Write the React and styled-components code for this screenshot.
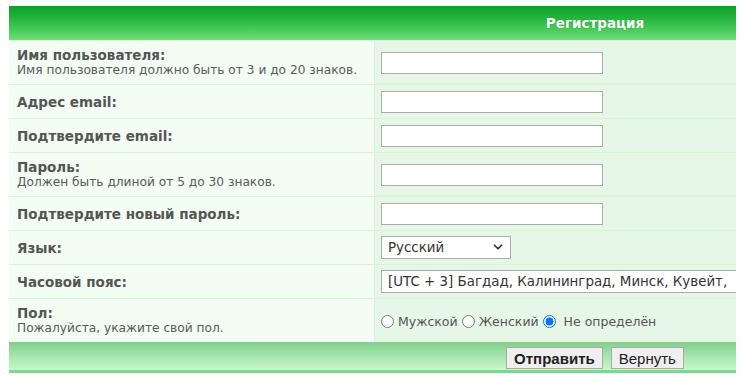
import React from 'react'
import styled, { createGlobalStyle } from 'styled-components'
import { ChevronDown } from 'lucide-react'

const Global = createGlobalStyle`
  html, body { margin: 0; padding: 0; background: #fff; }
  body { font-family: "DejaVu Sans", Verdana, sans-serif; overflow: hidden; }
`

const Page = styled.div`
  padding: 6px 6px 0 9px;
  width: 742px;
  box-sizing: border-box;
`

const Table = styled.form`
  width: 727px;
  overflow: hidden;
  display: flex;
  flex-direction: column;
`

const Header = styled.div`
  height: 34px;
  background: linear-gradient(to bottom, #0c9f28 0%, #2cba44 45%, #6ddf78 100%);
  display: flex;
  align-items: center;
  justify-content: center;
  padding-left: 445px;
  color: #fff;
  font-weight: bold;
  font-size: 13.5px;
  text-shadow: 0 0 1px rgba(0, 80, 0, 0.3);
`

const Row = styled.div`
  display: grid;
  grid-template-columns: 366px 1fr;
  min-height: ${({tall}) => tall ? 43 : 33}px;
  border-top: 1px solid #d9f3d9;
`

const LabelCell = styled.div`
  background: #f3fdf3;
  border-right: 1px solid #dcf3dc;
  padding: 0 8px;
  display: flex;
  flex-direction: column;
  justify-content: center;
`

const Label = styled.div`
  color: #555;
  font-weight: bold;
  font-size: 13.5px;
  line-height: 16px;
`

const Hint = styled.div`
  color: #5a5a5a;
  font-size: 12.2px;
  line-height: 15px;
`

const FieldCell = styled.div`
  background: #e7f7e7;
  padding: 0 6px;
  display: flex;
  align-items: center;
  white-space: nowrap;
  overflow: hidden;
`

const TextInput = styled.input`
  width: 222px;
  height: 22px;
  box-sizing: border-box;
  border: 1px solid #aaa;
  background: #fff;
  margin: 0;
`

const SelectWrap = styled.div`
  position: relative;
  width: ${({width}) => width};
  flex: none;
`

const Select = styled.div`
  height: 23px;
  box-sizing: border-box;
  border: 1px solid #aaa;
  background: #fff;
  color: #333;
  font-size: 13.4px;
  line-height: 21px;
  padding: 0 6px;
  white-space: nowrap;
`

const Arrow = styled.span`
  position: absolute;
  right: 6px;
  top: 4px;
  color: #333;
  display: flex;
`

const Radios = styled.div`
  display: flex;
  align-items: center;
  font-size: 12.5px;
  color: #555;
  padding-top: 1px;
`

const RadioLabel = styled.label`
  display: flex;
  align-items: center;
`

const Radio = styled.input`
  width: 13px;
  height: 13px;
  margin: 0 4px 0 0;
  accent-color: #0075ff;
`

const Footer = styled.div`
  height: 28px;
  background: linear-gradient(to bottom, #7fcf8c 0%, #a9e7b0 55%, #c9f6c9 100%);
  border-bottom: 3px solid #86d28f;
  display: flex;
  align-items: center;
  justify-content: center;
  gap: 8px;
  padding-left: 445px;
`

const Button = styled.button`
  font-family: "Liberation Sans", Arial, sans-serif;
  font-size: 15px;
  font-weight: ${({primary}) => primary ? 'bold' : 'normal'};
  color: #222;
  background: #efefef;
  border: 1px solid #aaa;
  height: 22px;
  padding: 0 7px;
  margin-top: 4px;
`

const fields = [
  { label: 'Имя пользователя:', hint: 'Имя пользователя должно быть от 3 и до 20 знаков.', kind: 'text' },
  { label: 'Адрес email:', kind: 'text' },
  { label: 'Подтвердите email:', kind: 'text' },
  { label: 'Пароль:', hint: 'Должен быть длиной от 5 до 30 знаков.', kind: 'text' },
  { label: 'Подтвердите новый пароль:', kind: 'text' },
  { label: 'Язык:', kind: 'lang' },
  { label: 'Часовой пояс:', kind: 'tz' },
  { label: 'Пол:', hint: 'Пожалуйста, укажите свой пол.', kind: 'gender' },
]

const Field = ({kind}) => {
  if (kind === 'lang') {
    return (
      <SelectWrap width="130px">
        <Select>Русский</Select>
        <Arrow><ChevronDown size={14} strokeWidth={3} /></Arrow>
      </SelectWrap>
    )
  }
  if (kind === 'tz') {
    return (
      <SelectWrap width="420px">
        <Select>[UTC + 3] Багдад, Калининград, Минск, Кувейт,</Select>
      </SelectWrap>
    )
  }
  if (kind === 'gender') {
    return (
      <Radios>
        <RadioLabel><Radio type="radio" name="g" />Мужской&nbsp;</RadioLabel>
        <RadioLabel><Radio type="radio" name="g" />Женский&nbsp;</RadioLabel>
        <RadioLabel><Radio type="radio" name="g" defaultChecked />&nbsp;Не определён</RadioLabel>
      </Radios>
    )
  }
  return <TextInput type="text" />
}

const App = () => (
  <Page>
    <Global />
    <Table onSubmit={e => e.preventDefault()}>
      <Header>Регистрация</Header>
      {fields.map(f => (
        <Row key={f.label} tall={!!f.hint}>
          <LabelCell>
            <Label>{f.label}</Label>
            {f.hint && <Hint>{f.hint}</Hint>}
          </LabelCell>
          <FieldCell>
            <Field kind={f.kind} />
          </FieldCell>
        </Row>
      ))}
      <Footer>
        <Button primary type="submit">Отправить</Button>
        <Button type="reset">Вернуть</Button>
      </Footer>
    </Table>
  </Page>
)

export default App
